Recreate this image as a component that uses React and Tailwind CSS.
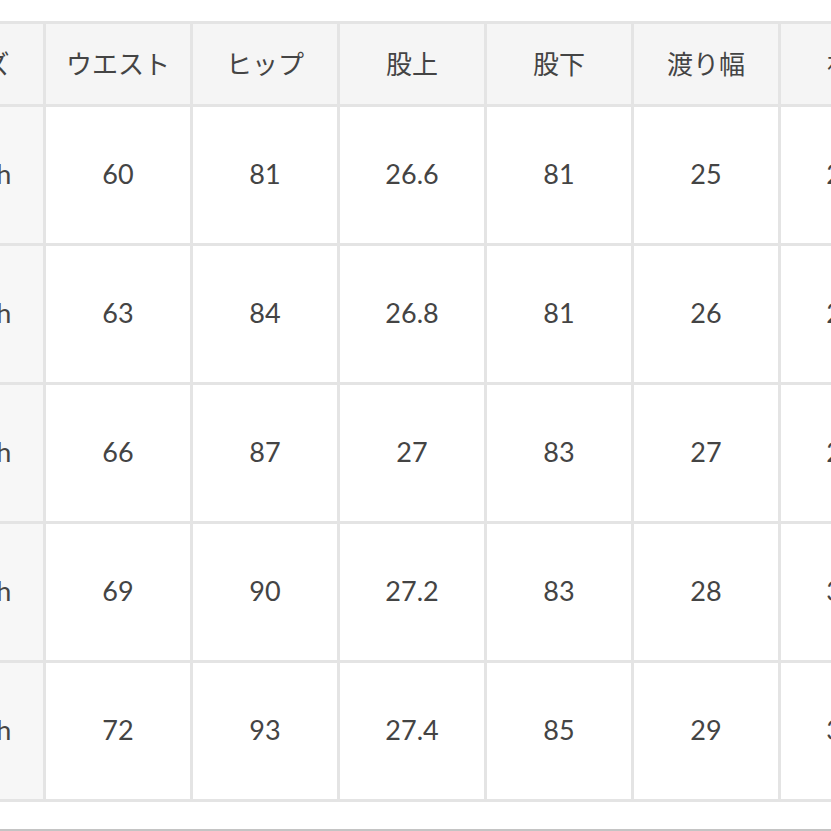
import React from "react";

const headers = ["サイズ", "ウエスト", "ヒップ", "股上", "股下", "渡り幅", "裾幅", "総丈"];
const rows = [
  ["24inch", "60", "81", "26.6", "81", "25", "27.5", "103"],
  ["25inch", "63", "84", "26.8", "81", "26", "28.5", "104"],
  ["26inch", "66", "87", "27", "83", "27", "29.5", "106"],
  ["27inch", "69", "90", "27.2", "83", "28", "30.5", "107"],
  ["28inch", "72", "93", "27.4", "85", "29", "31.5", "109"],
];

const font = { fontFamily: '"Lato", "Noto Sans CJK JP", sans-serif' };

export default function App() {
  return (
    <div className="w-[831px] h-[831px] overflow-hidden bg-white flex flex-col" style={font}>
      <div className="pt-[21px]">
        <div className="ml-[-104px] w-max grid grid-cols-[repeat(8,144px)] grid-rows-[80px_repeat(5,136px)] gap-[3px] p-[3px] bg-[#e4e4e4]">
          {headers.map((h, i) => (
            <div
              key={"h" + i}
              className="bg-[#f5f5f5] flex items-center justify-center pb-[3px] text-[26px] text-[#444] leading-none"
              style={{ fontFamily: '"Noto Sans CJK JP", sans-serif' }}
            >
              {h}
            </div>
          ))}
          {rows.map((r, ri) =>
            r.map((c, ci) => (
              <div
                key={ri + "-" + ci}
                className={
                  "flex items-center justify-center pb-[3px] text-[27px] text-[#444] leading-none " +
                  (ci === 0 ? "bg-[#f7f7f7]" : "bg-white")
                }
              >
                {c}
              </div>
            ))
          )}
        </div>
      </div>
      <div className="mt-[27px] h-[2px] bg-[#c4c4c4] w-full" />
    </div>
  );
}
